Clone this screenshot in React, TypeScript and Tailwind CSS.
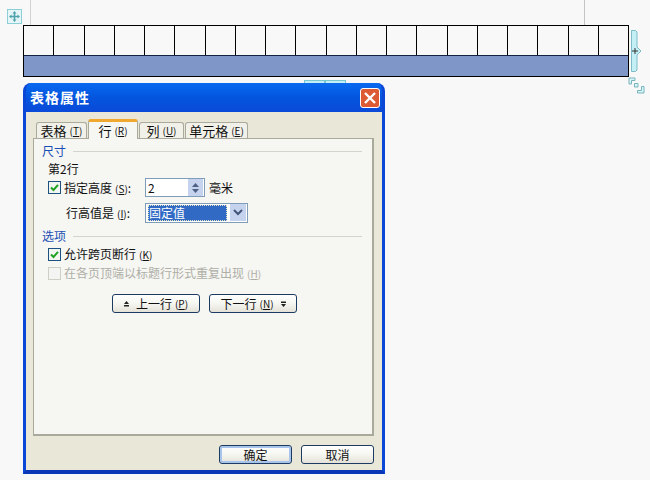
const font = { fontFamily: '"Noto Sans CJK SC", "Liberation Sans", sans-serif' }

function Key({ k }: { k: string }) {
  return (
    <span className="ml-[3px] text-[10px]">
      (<span className="underline">{k}</span>)
    </span>
  )
}

function CheckBox({ checked, disabled }: { checked?: boolean; disabled?: boolean }) {
  return (
    <span
      className={`flex h-[13px] w-[13px] shrink-0 items-center justify-center border ${
        disabled ? "border-[#cfcfc6] bg-[#f4f4f2]" : "border-[#1c5180] bg-[#f2f6f2]"
      }`}
    >
      {checked && (
        <svg width="11" height="11" viewBox="0 0 11 11">
          <path d="M2 5.5 L4.5 8 L9 2.8" fill="none" stroke="#21a121" strokeWidth="2" />
        </svg>
      )}
    </span>
  )
}

function Tab({ label, k, width, active }: { label: string; k: string; width: string; active?: boolean }) {
  if (active) {
    return (
      <div className={`relative z-10 -mb-px flex h-[20px] ${width} items-start justify-center rounded-t-[3px] border-x border-[#a9a99c] border-t-[3px] border-t-[#f0a92e] bg-[#f6f6f3] pt-px text-[13px] leading-[15px]`}>
        {label}
        <Key k={k} />
      </div>
    )
  }
  return (
    <div className={`flex h-[16px] ${width} items-center justify-center rounded-t-[3px] border-x border-t border-[#a9a99c] bg-[#f1f1ea] text-[13px] leading-[15px]`}>
      {label}
      <Key k={k} />
    </div>
  )
}

function SectionTitle({ title }: { title: string }) {
  return (
    <div className="flex items-center">
      <span className="w-[31px] text-[12px] leading-[16px] text-[#1a4fb5]">{title}</span>
      <div className="h-px w-[289px] bg-[#d4d4cc]" />
    </div>
  )
}

function PushButton({ children, width, primary }: { children: React.ReactNode; width: string; primary?: boolean }) {
  return (
    <div
      className={`flex h-[19px] ${width} items-center justify-center rounded-[3px] border border-[#1d3a63] bg-gradient-to-b from-white via-[#f6f6f1] to-[#e4e2d8] text-[12px] leading-none ${
        primary ? "shadow-[inset_0_0_0_2px_#a9c4ea]" : ""
      }`}
    >
      {children}
    </div>
  )
}

function Ruler() {
  return (
    <div className="flex h-[25px] pl-[30px]">
      <div className="h-full w-px bg-[#d2d2d2]" />
      <div className="ml-[553px] h-full w-px bg-[#c4c4c4]" />
    </div>
  )
}

function TableBlock() {
  return (
    <div className="ml-[23px] w-[606px] border border-black">
      <div className="flex h-[30px] border-b border-[#14213f]">
        {Array.from({ length: 20 }).map((_, i) => (
          <div key={i} className="flex-1 border-l border-black first:border-l-0" />
        ))}
      </div>
      <div className="h-[20px] bg-[#7f96c8]" />
    </div>
  )
}

function Dialog() {
  return (
    <div className="relative ml-[23px] mt-[6px] h-[391px] w-[362px] overflow-hidden rounded-t-[8px] border-x-[3px] border-b-[4px] border-x-[#0a47d6] border-b-[#0a37b8] bg-[#0a47d6] text-[#111]">
      <div className="flex h-[29px] items-center justify-between bg-gradient-to-b from-[#0a6af0] via-[#0455de] to-[#0a4ad8] pl-[4px] pr-[2px]">
        <span className="text-[14px] font-bold tracking-[1px] text-white">表格属性</span>
        <div className="flex h-[20px] w-[20px] items-center justify-center rounded-[3px] border border-white bg-[#dc5a34]">
          <svg width="14" height="14" viewBox="0 0 14 14">
            <path d="M2 2 L12 12 M12 2 L2 12" stroke="#fff" strokeWidth="2.4" />
          </svg>
        </div>
      </div>
      <div className="h-[359px] bg-[#e9e7d8] px-[7px] pt-[7px]">
        <div className="flex items-end gap-px pl-[3px]">
          <Tab label="表格" k="T" width="w-[51px]" />
          <Tab label="行" k="R" width="w-[50px]" active />
          <Tab label="列" k="U" width="w-[45px]" />
          <Tab label="单元格" k="E" width="w-[63px]" />
        </div>
        <div className="h-[298px] w-[341px] border border-b-2 border-r-2 border-[#a9a99c] bg-[#f6f6f3] pl-[8px] pt-[4px]">
          <SectionTitle title="尺寸" />
          <div className="ml-[6px] mt-[2px] text-[12px] leading-[16px]">第2行</div>
          <div className="ml-[6px] flex h-[21px] items-center">
            <CheckBox checked />
            <span className="ml-[3px] w-[81px] text-[12px]">
              指定高度
              <Key k="S" />:
            </span>
            <div className="flex h-[19px] w-[60px] items-center justify-between border border-[#7f9db9] bg-white pl-[2px] pr-px text-[12px]">
              2
              <div className="flex h-[17px] w-[15px] flex-col items-center justify-center gap-[2px] bg-[#c6d3ef]">
                <svg width="7" height="4" viewBox="0 0 7 4"><path d="M3.5 0 L7 4 H0 Z" fill="#4d6185" /></svg>
                <svg width="7" height="4" viewBox="0 0 7 4"><path d="M3.5 4 L7 0 H0 Z" fill="#4d6185" /></svg>
              </div>
            </div>
            <span className="ml-[4px] text-[12px]">毫米</span>
          </div>
          <div className="ml-[24px] mt-[5px] flex h-[19px] items-center">
            <span className="w-[79px] text-[12px]">
              行高值是
              <Key k="I" />:
            </span>
            <div className="flex h-[20px] w-[103px] items-center border border-[#7f9db9] bg-white p-px">
              <div className="ml-px h-[16px] flex-1 border border-dotted border-[#e5e5c0] bg-[#316ac5] text-[12px] leading-[14px] text-white">固定值</div>
              <div className="ml-[3px] flex h-[17px] w-[16px] items-center justify-center bg-[#c6d3ef]">
                <svg width="10" height="7" viewBox="0 0 10 7"><path d="M1 1 L5 5 L9 1" fill="none" stroke="#42557a" strokeWidth="2" /></svg>
              </div>
            </div>
          </div>
          <div className="mt-[6px]">
            <SectionTitle title="选项" />
          </div>
          <div className="ml-[6px] mt-px flex h-[18px] items-center">
            <CheckBox checked />
            <span className="ml-[3px] text-[12px]">
              允许跨页断行
              <Key k="K" />
            </span>
          </div>
          <div className="ml-[6px] mt-px flex h-[18px] items-center text-[#aeaea6]">
            <CheckBox disabled />
            <span className="ml-[3px] text-[12px]">
              在各页顶端以标题行形式重复出现
              <Key k="H" />
            </span>
          </div>
          <div className="ml-[70px] mt-[12px] flex gap-[9px]">
            <PushButton width="w-[88px]">
              <svg width="5" height="6" viewBox="0 0 5 6" className="mr-[7px]"><path d="M2.5 0 L5 3 H0 Z M0 4 H5 V5.5 H0 Z" fill="#222" /></svg>
              上一行
              <Key k="P" />
            </PushButton>
            <PushButton width="w-[88px]">
              下一行
              <Key k="N" />
              <svg width="5" height="6" viewBox="0 0 5 6" className="ml-[7px]"><path d="M0 .5 H5 V2 H0 Z M2.5 6 L5 3 H0 Z" fill="#222" /></svg>
            </PushButton>
          </div>
        </div>
        <div className="mt-[9px] flex justify-end gap-[9px] pr-[1px]">
          <PushButton width="w-[73px]" primary>确定</PushButton>
          <PushButton width="w-[73px]">取消</PushButton>
        </div>
      </div>
    </div>
  )
}

export default function App() {
  return (
    <div className="relative h-[480px] w-[650px] overflow-hidden bg-[#f8f8f8]" style={font}>
      <Ruler />
      <TableBlock />
      <Dialog />

      {/* table handles, they sit over the page */}
      <div className="absolute left-[7px] top-[9px] flex h-[15px] w-[15px] items-center justify-center border border-[#8ccfd6] bg-[#e6f6f8]">
        <svg width="11" height="11" viewBox="0 0 11 11">
          <path d="M5.5 0 L7.5 2.5 H6.3 V4.7 H8.5 V3.5 L11 5.5 L8.5 7.5 V6.3 H6.3 V8.5 H7.5 L5.5 11 L3.5 8.5 H4.7 V6.3 H2.5 V7.5 L0 5.5 L2.5 3.5 V4.7 H4.7 V2.5 H3.5 Z" fill="#4fa3ad" />
        </svg>
      </div>
      <svg className="absolute left-[630px] top-[29px]" width="14" height="44" viewBox="0 0 14 44">
        <path d="M1.5 1.5 H5.5 L7 3 V18 L11 22 L7 26 V41 L5.5 42.5 H1.5 Z" fill="#c4f0f5" stroke="#7cbcc6" />
        <path d="M2 22 H8 M5 19 V25" stroke="#333" />
      </svg>
      <svg className="absolute left-[628px] top-[77px]" width="17" height="17" viewBox="0 0 17 17">
        <path d="M1 1 H7 V3.5 H3.5 V7 H1 Z M6.5 6.5 H10 V10 H6.5 Z M13.5 9.5 H16 V16 H9.5 V13.5 H13.5 Z" fill="#d8f5f8" stroke="#78b4bd" />
      </svg>
      <div className="absolute left-[304px] top-[80px] flex h-[3px] w-[42px]">
        <div className="flex-1 border border-b-0 border-[#7cc8d2] bg-[#c4f0f5]" />
        <div className="flex-1 border border-b-0 border-[#7cc8d2] bg-[#c4f0f5]" />
      </div>
    </div>
  )
}
